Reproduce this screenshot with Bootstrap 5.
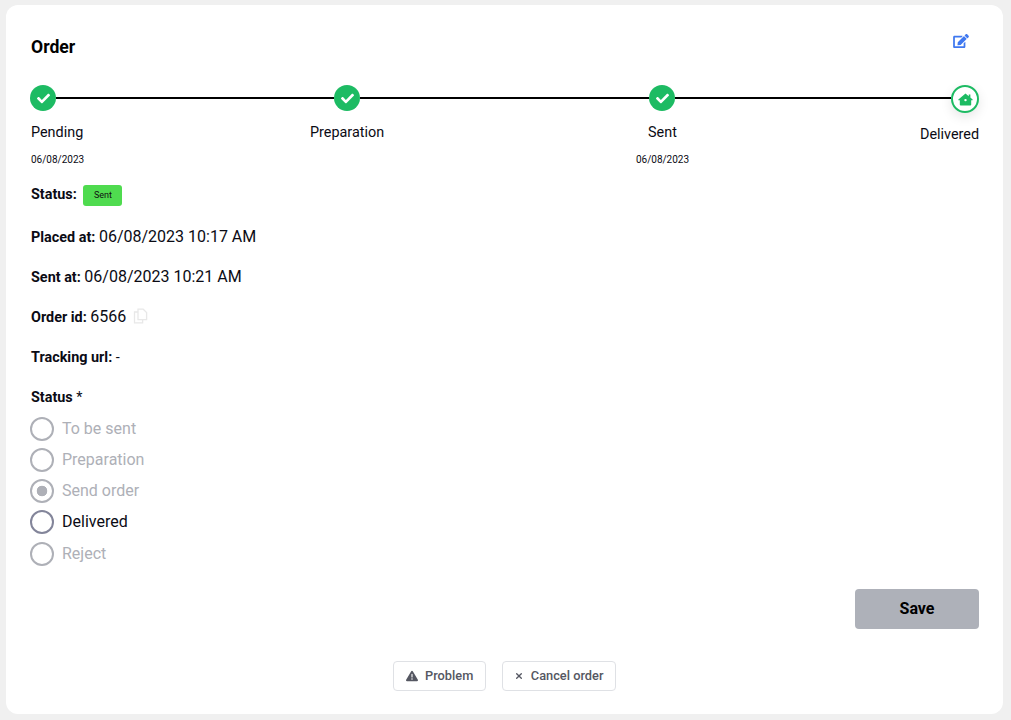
<!DOCTYPE html>
<html lang="en">
<head>
<meta charset="utf-8">
<title>Order</title>
<link href="https://cdn.jsdelivr.net/npm/bootstrap@5.3.0/dist/css/bootstrap.min.css" rel="stylesheet">
<style>
html,body{height:100%}
body{background:#f0f0f0;font-family:Roboto,"Liberation Sans",sans-serif;color:#0b0b14;padding:5px 8px 6px 6px;overflow:hidden}
.order-card{height:709px;border:0;border-radius:12px;padding:0 24px 0 25px;background:#fff}
.head-row{height:80px;padding-top:27px}
.order-title{font-size:17.6px;font-weight:700;line-height:30px;margin:0;color:#000}
.edit-ico{width:16px;height:14px;margin-top:2px;margin-right:10px;fill:#3f78f0}
.track{height:28px;margin-left:-1px}
.dot{width:26px;height:26px;border-radius:50%;background:#1dbb63;flex:none}
.dot svg{width:13px;height:13px;fill:#fff}
.dot-end{width:28px;height:28px;background:#fff;border:2px solid #1dbb63;box-shadow:0 4px 12px rgba(0,0,0,.1)}
.dot-end svg{width:15px;height:13px;fill:#1dbb63}
.link-line{height:2px;background:#000;margin-top:12px}
.seg-a{width:278px}.seg-b{width:289px}.seg-c{width:276px}
.step-grid{display:grid;grid-template-columns:53px 226px 75px 250px 55px 230px 60px;margin-top:10px;font-size:14.4px;line-height:20px;height:61px}
.step-name{white-space:nowrap}
.step-c1{grid-column:1}.step-c3{grid-column:3}.step-c5{grid-column:5;text-align:center}.step-c7{grid-column:7;padding-top:2px}
.step-date{font-size:10px;line-height:14px;margin-top:10px;white-space:nowrap}
.field{font-size:14.4px;font-weight:700;line-height:24px;margin:0;height:24px;color:#0b0b14;white-space:nowrap}
.field span.val{font-size:16px;font-weight:400}
.field + .field{margin-top:16px}
.field + .field.tracking-field{margin-top:17px}
.status-field{height:24px;line-height:22px;margin-bottom:1px}
.pill-sent{display:inline-block;background:#4fdb4f;color:#111;font-size:9px;font-weight:400;line-height:21px;height:21px;width:39px;text-align:center;border-radius:3px;vertical-align:top;margin-left:3px;margin-top:1px}
.copy-ico{width:15px;height:16px;margin-left:7px;vertical-align:-2px;fill:none;stroke:#e8e8e8;stroke-width:1.3}
.status-label{margin-bottom:7px}
.choice{display:flex;align-items:center;height:24px;margin:0 0 7px -1px;padding:0;min-height:0}
.choice.live{margin-bottom:8px}
.choice .form-check-input{width:24px;height:24px;margin:0 8px 0 0;float:none;flex:none;border:2px solid #aeb0b7;background-color:#fff;opacity:1;--bs-form-check-bg-image:none}
.choice .form-check-input:checked{background-image:radial-gradient(circle,#aeb0b7 0 5px,transparent 5.6px);border-color:#aeb0b7}
.choice .form-check-input[disabled]~.form-check-label,.choice .form-check-label{font-size:16px;line-height:24px;color:#aeb0b7;opacity:1}
.choice.live .form-check-input{border-color:#83859a}
.choice.live .form-check-label{color:#0b0b14}
.save-row{margin-top:16px}
.save-btn{width:124px;height:40px;background:#aeb1b9;border:0;border-radius:4px;color:#000;font-weight:700;font-size:16px;padding:0}
.save-btn:disabled{background:#aeb1b9;color:#000;opacity:1}
.foot-row{margin-top:32px;margin-right:1px;gap:16px}
.ghost-btn{height:30px;padding:0 12px;border:1px solid #dfe1e5;border-radius:4px;background:#fff;color:#555762;font-size:12.8px;font-weight:500;display:inline-flex;align-items:center;gap:7.5px;line-height:1}
.ghost-btn svg{width:12px;height:12px;fill:#555762}
.ghost-btn svg.x-ico{width:8px}
</style>
</head>
<body>
<div class="card order-card">
  <div class="d-flex justify-content-between align-items-start head-row">
    <h1 class="order-title">Order</h1>
    <svg class="edit-ico" viewBox="0 0 576 512" aria-hidden="true"><path d="M402.600 83.200l90.200 90.200c3.800 3.800 3.800 10 0 13.800L274.400 405.600l-92.800 10.300c-12.400 1.400-22.900-9.100-21.500-21.500l10.300-92.800L388.800 83.200c3.800-3.800 10-3.800 13.800 0zm162-22.900l-48.800-48.800c-15.200-15.200-39.900-15.200-55.200 0l-35.400 35.400c-3.800 3.800-3.800 10 0 13.800l90.200 90.200c3.800 3.800 10 3.800 13.800 0l35.400-35.400c15.200-15.300 15.200-40 0-55.200zM384 346.200V448H64V128h229.800c3.200 0 6.200-1.300 8.500-3.500l40-40c7.600-7.600 2.200-20.500-8.500-20.500H48C21.500 64 0 85.500 0 112v352c0 26.500 21.500 48 48 48h352c26.500 0 48-21.500 48-48V306.200c0-10.700-12.900-16-20.500-8.500l-40 40c-2.200 2.300-3.500 5.300-3.500 8.500z"/></svg>
  </div>
  <div class="d-flex align-items-start track">
    <div class="dot d-flex align-items-center justify-content-center"><svg viewBox="0 0 512 512"><path d="M173.898 439.404l-166.400-166.400c-9.997-9.997-9.997-26.206 0-36.204l36.203-36.204c9.997-9.998 26.207-9.998 36.204 0L192 312.690 432.095 72.596c9.997-9.997 26.207-9.997 36.204 0l36.203 36.204c9.997 9.997 9.997 26.206 0 36.204l-294.400 294.401c-9.998 9.997-26.207 9.997-36.204-.001z"/></svg></div>
    <div class="link-line seg-a"></div>
    <div class="dot d-flex align-items-center justify-content-center"><svg viewBox="0 0 512 512"><path d="M173.898 439.404l-166.400-166.400c-9.997-9.997-9.997-26.206 0-36.204l36.203-36.204c9.997-9.998 26.207-9.998 36.204 0L192 312.690 432.095 72.596c9.997-9.997 26.207-9.997 36.204 0l36.203 36.204c9.997 9.997 9.997 26.206 0 36.204l-294.400 294.401c-9.998 9.997-26.207 9.997-36.204-.001z"/></svg></div>
    <div class="link-line seg-b"></div>
    <div class="dot d-flex align-items-center justify-content-center"><svg viewBox="0 0 512 512"><path d="M173.898 439.404l-166.400-166.400c-9.997-9.997-9.997-26.206 0-36.204l36.203-36.204c9.997-9.998 26.207-9.998 36.204 0L192 312.690 432.095 72.596c9.997-9.997 26.207-9.997 36.204 0l36.203 36.204c9.997 9.997 9.997 26.206 0 36.204l-294.400 294.401c-9.998 9.997-26.207 9.997-36.204-.001z"/></svg></div>
    <div class="link-line seg-c"></div>
    <div class="dot dot-end d-flex align-items-center justify-content-center"><svg viewBox="0 0 576 512"><path d="M288 16 L416 126 V56 H480 V181 L568 258 C580 270 572 288 556 288 H512 V464 C512 482 498 496 480 496 H96 C78 496 64 482 64 464 V288 H20 C4 288 -4 270 8 258 Z M288 232 A48 48 0 1 0 288.100 328 A48 48 0 1 0 288 232 Z" fill-rule="evenodd"/></svg></div>
  </div>
  <div class="step-grid">
    <div class="step-c1"><div class="step-name">Pending</div><div class="step-date">06/08/2023</div></div>
    <div class="step-c3"><div class="step-name">Preparation</div></div>
    <div class="step-c5"><div class="step-name">Sent</div><div class="step-date">06/08/2023</div></div>
    <div class="step-c7"><div class="step-name">Delivered</div></div>
  </div>
  <p class="field status-field">Status: <span class="pill-sent">Sent</span></p>
  <p class="field">Placed at: <span class="val">06/08/2023 10:17 AM</span></p>
  <p class="field">Sent at: <span class="val">06/08/2023 10:21 AM</span></p>
  <p class="field">Order id: <span class="val">6566</span><svg class="copy-ico" viewBox="0 0 15 16" aria-hidden="true"><path d="M5 1.200h5.200L13.600 4.500V11.600H5Z"/><path d="M5 4H1.500V14.800H9.600V11.600"/></svg></p>
  <p class="field tracking-field">Tracking url: <span class="fw-normal">-</span></p>
  <p class="field status-label"><span>Status</span> <span class="fw-normal">*</span></p>
  <div class="form-check choice"><input class="form-check-input" type="radio" name="st" id="r1" disabled><label class="form-check-label" for="r1">To be sent</label></div>
  <div class="form-check choice"><input class="form-check-input" type="radio" name="st" id="r2" disabled><label class="form-check-label" for="r2">Preparation</label></div>
  <div class="form-check choice"><input class="form-check-input" type="radio" name="st" id="r3" checked disabled><label class="form-check-label" for="r3">Send order</label></div>
  <div class="form-check choice live"><input class="form-check-input" type="radio" name="st" id="r4"><label class="form-check-label" for="r4">Delivered</label></div>
  <div class="form-check choice"><input class="form-check-input" type="radio" name="st" id="r5" disabled><label class="form-check-label" for="r5">Reject</label></div>
  <div class="d-flex justify-content-end save-row"><button class="btn save-btn" disabled>Save</button></div>
  <div class="d-flex justify-content-center foot-row">
    <button class="btn ghost-btn"><svg viewBox="0 0 512 512"><path d="M256 32c14 0 27 8 34 20l216 368c7 12 7 27 0 39s-20 21-34 21H40c-14 0-27-8-34-21s-7-27 0-39L222 52c7-12 20-20 34-20zm0 128c-13 0-24 11-24 24v112c0 13 11 24 24 24s24-11 24-24V184c0-13-11-24-24-24zm32 224a32 32 0 1 0-64 0 32 32 0 1 0 64 0z"/></svg>Problem</button>
    <button class="btn ghost-btn"><svg class="x-ico" viewBox="0 0 384 512"><path d="M326.600 166.600a32 32 0 0 0-45.200-45.200L192 210.700l-89.400-89.300a32 32 0 0 0-45.200 45.200L146.700 256l-89.300 89.400a32 32 0 0 0 45.200 45.200L192 301.300l89.400 89.300a32 32 0 0 0 45.200-45.200L237.300 256z"/></svg>Cancel order</button>
  </div>
</div>
<script src="https://cdn.jsdelivr.net/npm/bootstrap@5.3.0/dist/js/bootstrap.bundle.min.js"></script>
</body>
</html>
